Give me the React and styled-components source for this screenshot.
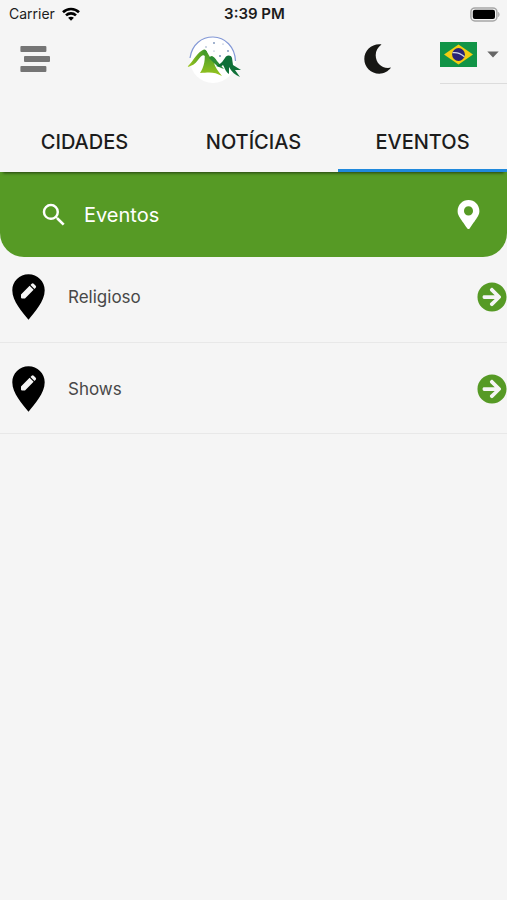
import React, { useState } from "react";
import styled, { createGlobalStyle } from "styled-components";
import { FaMapMarkerAlt, FaArrowCircleRight } from "react-icons/fa";
import { MdSearch } from "react-icons/md";

const GlobalStyle = createGlobalStyle`
  * { box-sizing: border-box; }
  body {
    margin: 0;
    background: #f5f5f5;
    color: #1c1c1c;
    font-family: Inter, "Liberation Sans", sans-serif;
  }
  button, input, select { font: inherit; color: inherit; }
  button { border: 0; padding: 0; background: none; cursor: pointer; }
  svg { display: block; flex: none; }
`;

const Screen = styled.div`
  min-height: 100vh;
  background: #f5f5f5;
`;

const StatusBar = styled.div`
  display: grid;
  grid-template-columns: 1fr auto 1fr;
  align-items: center;
  height: 28px;
  padding: 0 7px 0 9px;
  font-size: 14px;
  line-height: 20px;
`;

const Carrier = styled.span`
  display: flex;
  align-items: center;
  gap: 7px;
`;

const Clock = styled.time`
  font-size: 15px;
  font-weight: 600;
`;

const Battery = styled.span`
  justify-self: end;
`;

const Header = styled.header`
  display: grid;
  grid-template-columns: 5fr auto 8fr;
  align-items: center;
  height: 62px;
  padding-left: 20px;
`;

const IconButton = styled.button`
  display: flex;
  justify-self: start;
`;

const HeaderActions = styled.div`
  display: flex;
  align-items: center;
  justify-content: flex-end;
  gap: 48px;
`;

const LanguageField = styled.label`
  position: relative;
  display: flex;
  align-items: center;
  gap: 10px;
  width: 67px;
  height: 56px;
  margin-bottom: 6px;
  padding-bottom: 2px;
  border-bottom: 1px solid #dcdcdc;
`;

const LanguageSelect = styled.select`
  position: absolute;
  inset: 0;
  width: 100%;
  border: 0;
  appearance: none;
  background: transparent;
  color: transparent;
  cursor: pointer;

  option { color: #1c1c1c; }
`;

const TabList = styled.nav`
  display: flex;
  height: 82px;
  position: relative;
  z-index: 1;
  box-shadow: 0 4px 3px -3px rgba(0, 0, 0, 0.6);
`;

const Tab = styled.button`
  flex: 1;
  padding-top: 24px;
  border-bottom: 3px solid ${(p) => (p["aria-selected"] ? "#2089dc" : "transparent")};
  font-size: 20px;
  font-weight: 500;
  line-height: 24px;
`;

const SearchBar = styled.form`
  display: flex;
  align-items: center;
  gap: 15px;
  height: 85px;
  padding: 0 24px 0 39px;
  border-radius: 0 0 24px 24px;
  background: #569a25;
  color: #fff;
`;

const SearchInput = styled.input`
  flex: 1;
  min-width: 0;
  padding: 0;
  border: 0;
  outline: 0;
  background: none;
  font-size: 20px;
  line-height: 28px;

  &::placeholder { color: #fff; opacity: 1; }
`;

const CategoryList = styled.ul`
  margin: 0;
  padding: 0;
  list-style: none;
`;

const CategoryItem = styled.li`
  border-bottom: 1px solid #e8e8e8;
`;

const CategoryButton = styled.button`
  display: flex;
  align-items: center;
  width: 100%;
  height: ${(p) => (p.$first ? "85px" : "90px")};
  padding: ${(p) => (p.$first ? "0 0 5px 12px" : "1px 0 0 12px")};
  text-align: left;
`;

const CategoryName = styled.span`
  flex: 1;
  margin-left: 23px;
  color: #484848;
  font-size: 17px;
  line-height: 24px;
`;

const ArrowIcon = styled(FaArrowCircleRight)`
  color: #569a25;
`;

const WifiIcon = () => (
  <svg width="18" height="14" viewBox="0 0 18 14" fill="none" stroke="#000" strokeWidth="2.6" aria-hidden="true">
    <path d="M1 5.2C5.4.9 12.6.9 17 5.2" />
    <path d="M4 8.4C6.8 5.7 11.2 5.7 14 8.4" />
    <path d="M9 13.8 6.1 10.8C7.7 9.3 10.3 9.3 11.9 10.8Z" fill="#000" stroke="none" />
  </svg>
);

const BatteryIcon = () => (
  <svg width="30" height="15" viewBox="0 0 30 15" aria-hidden="true">
    <rect x=".9" y=".9" width="26" height="13" rx="4" fill="#f5f5f5" stroke="#a6a6a6" strokeWidth="1.5" />
    <rect x="2.8" y="2.8" width="22.2" height="9.2" rx="2" fill="#000" />
    <path d="M28.2 5v5c1.8-.6 1.8-4.4 0-5Z" fill="#a6a6a6" />
  </svg>
);

const MenuIcon = () => (
  <svg width="30" height="28" viewBox="0 0 30 28" fill="#757575" aria-hidden="true">
    <rect x=".4" y="1" width="26" height="6" rx="1" />
    <rect x="4" y="11" width="26" height="6" rx="1" />
    <rect x=".4" y="21" width="26" height="6" rx="1" />
  </svg>
);

const MoonIcon = () => (
  <svg width="28" height="30" viewBox="0 0 28 30" fill="#171714" aria-hidden="true">
    <path d="M17.500.600C13.800 3.300 11.700 7 11.700 11.300C11.700 18.500 17 24 24 24L27 23.600C24.200 27.500 20 29.700 15.300 29.700C7 29.700.300 23.200.300 15C.300 6.800 7 .300 15.300.300C16.300.300 17 .400 17.500.600Z" />
  </svg>
);

const MountainLogo = () => (
  <svg width="56" height="48" viewBox="0 0 56 48" role="img" aria-label="Montanhas">
    <defs>
      <linearGradient id="ridge" x1="0" y1="0" x2="1" y2="0">
        <stop offset="0" stopColor="#a2c81c" />
        <stop offset="1" stopColor="#35922a" />
      </linearGradient>
      <linearGradient id="face" x1="0" y1="0" x2="0" y2="1">
        <stop offset="0" stopColor="#3a962a" />
        <stop offset="1" stopColor="#9ac51e" />
      </linearGradient>
    </defs>
    <circle cx="27" cy="25" r="23" fill="#fff" />
    <path d="M4 23C6 9 16 2 27 2C39 2 49 12 49.500 26" fill="none" stroke="#8398d6" strokeWidth="1.200" />
    <path d="M1 32C6 28 10 19 16 15.500C19 13.500 20 15 21 17L19 21C17 19 15 21 12 25C9 29 6 31 1 32Z" fill="url(#ridge)" />
    <path d="M18 15C21 15 22 19 24 22C26 20 28 22 30 26L34 32L28 28C29 32 32 36 36 41C29 37 25 37 14 38C18 32 20 24 18 15Z" fill="url(#face)" />
    <path d="M23 23C26 19 29 23 31 26L38 34C34 33 31 31 27 27Z" fill="#2b8b36" />
    <path d="M30 31C36 29 38 24 40 21.500C42 20 45 20 46 23L47 30L55 35L49 35L54 42C49 40 46 37 43 32C43 35 43 37 43 39C39 36 39 33 37 30C35 32 33 32 30 31Z" fill="#0f7038" />
    <g fill="#7890b8">
      <circle cx="28" cy="8" r=".9" /><circle cx="20" cy="12" r=".7" />
      <circle cx="42" cy="16" r=".9" /><circle cx="34" cy="21" r="1" />
      <circle cx="28" cy="16" r=".6" /><circle cx="37" cy="9" r=".6" />
    </g>
  </svg>
);

const BrazilFlag = () => (
  <svg width="37" height="25" viewBox="0 0 37 25" aria-hidden="true">
    <path fill="#119447" d="M0 0h37v25H0z" />
    <path fill="#f3cd12" d="m4 12.500 14.500-10 14.500 10-14.500 10Z" />
    <circle cx="18.500" cy="12.500" r="6.400" fill="#2a2475" />
    <path d="M12.600 10.700Q19 9.800 24.400 14.800" fill="none" stroke="#d0d8e8" strokeWidth="1.200" />
  </svg>
);

const CaretIcon = () => (
  <svg width="12" height="7" viewBox="0 0 12 7" aria-hidden="true">
    <path d="M.3.500h11.400L6 6.500Z" fill="#666" />
  </svg>
);

const EditPinIcon = () => (
  <svg width="33" height="46" viewBox="0 0 33 46" aria-hidden="true">
    <path d="M16.500.300C7.500.300.300 7.400.300 16.300C.300 27.500 10.500 38 16.500 45.800C22.500 38 32.700 27.500 32.700 16.300C32.700 7.400 25.500.300 16.500.300Z" />
    <path d="M9 20.400 17.600 11.800 21.600 15.800 13 24.400H9.800Q9 24.400 9 23.600ZM18.500 10.900l1.200-1.200q1-.9 2 0l2 2q.9 1 0 2l-1.200 1.200Z" fill="#f5f5f5" />
  </svg>
);

const TABS = ["CIDADES", "NOTÍCIAS", "EVENTOS"];
const CATEGORIES = ["Religioso", "Shows"];

export default function App() {
  const [tab, setTab] = useState("EVENTOS");

  return (
    <>
      <GlobalStyle />
      <Screen>
        <StatusBar>
          <Carrier>Carrier <WifiIcon /></Carrier>
          <Clock>3:39 PM</Clock>
          <Battery><BatteryIcon /></Battery>
        </StatusBar>
        <Header>
          <IconButton type="button" aria-label="Menu"><MenuIcon /></IconButton>
          <MountainLogo />
          <HeaderActions>
            <IconButton type="button" aria-label="Modo escuro"><MoonIcon /></IconButton>
            <LanguageField>
              <BrazilFlag />
              <CaretIcon />
              <LanguageSelect aria-label="Idioma" defaultValue="pt">
                <option value="pt" aria-label="Português" />
              </LanguageSelect>
            </LanguageField>
          </HeaderActions>
        </Header>
        <TabList role="tablist">
          {TABS.map((name) => (
            <Tab key={name} type="button" role="tab" aria-selected={tab === name} onClick={() => setTab(name)}>
              {name}
            </Tab>
          ))}
        </TabList>
        <main>
          <SearchBar role="search" onSubmit={(e) => e.preventDefault()}>
            <MdSearch size={30} aria-hidden="true" />
            <SearchInput type="text" aria-label="Pesquisar eventos" placeholder="Eventos" />
            <IconButton type="button" aria-label="Localização"><FaMapMarkerAlt size={29} /></IconButton>
          </SearchBar>
          <CategoryList>
            {CATEGORIES.map((name, i) => (
              <CategoryItem key={name}>
                <CategoryButton type="button" $first={i === 0}>
                  <EditPinIcon />
                  <CategoryName>{name}</CategoryName>
                  <ArrowIcon size={30} aria-hidden="true" />
                </CategoryButton>
              </CategoryItem>
            ))}
          </CategoryList>
        </main>
      </Screen>
    </>
  );
}
